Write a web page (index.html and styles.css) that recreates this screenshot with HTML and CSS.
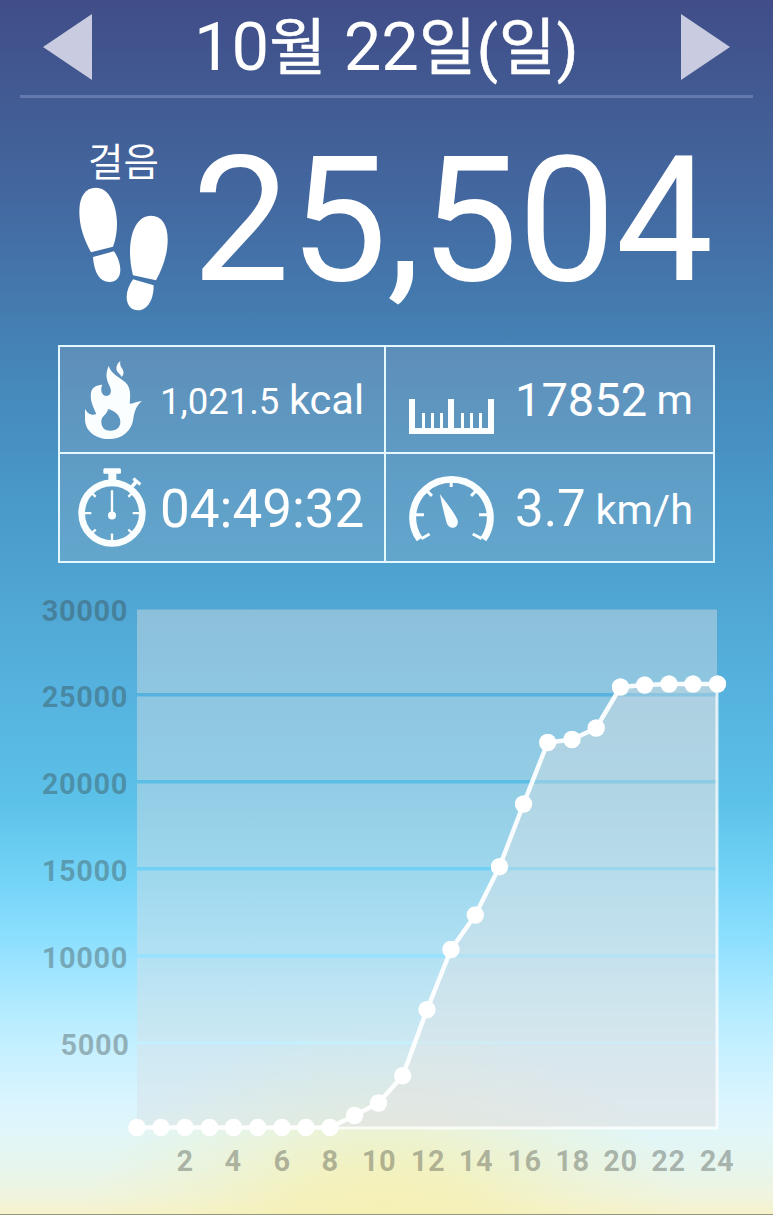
FILE: index.html
```
<!DOCTYPE html>
<html lang="ko">
<head>
<meta charset="UTF-8" />
<meta name="viewport" content="width=device-width, initial-scale=1" />
<title>만보기</title>
<link rel="stylesheet" href="styles.css">
</head>

<body>
<div class="app">

  <header class="date-bar">
    <button class="arrow" aria-label="이전"><svg viewBox="0 0 49 66"><path d="M0 33 49 0V66Z"/></svg></button>
    <h1>10<span>월</span> 22<span>일(일)</span></h1>
    <button class="arrow" aria-label="다음"><svg viewBox="0 0 49 66"><path d="M49 33 0 0V66Z"/></svg></button>
  </header>

  <section class="steps">
    <div class="steps-label">
      <span>걸음</span>
      <svg class="feet" viewBox="57 172 267 370">
        <path d="M93 367C72 327 58 292 58 243C58 199 77 173 107 173C146 173 170 221 171 281C171 305 167 328 159 350Z"/>
        <path d="M99 381 162 364C172 379 181 399 181 419C181 442 168 456 148 456C119 456 102 427 99 381Z"/>
        <path d="M219 436C213 412 210 389 210 365C210 303 233 257 273 257C304 257 323 283 323 329C323 375 307 415 288 451Z"/>
        <path d="M219 448 281 466C281 509 263 541 234 541C212 541 200 524 200 501C200 482 208 465 219 448Z"/>
      </svg>
    </div>
    <div class="count">25,504</div>
  </section>

  <section class="stats">
    <div class="stat">
      <svg class="flame" viewBox="105 65 171 234">
        <path fill-rule="evenodd" d="M176 80C182 100 202 111 221 125C240 139 243 158 239 193C249 194 264 185 276 185C261 196 253 215 250 238C245 275 217 299 176 299C136 299 105 275 105 239V208C111 221 124 231 139 224C133 207 119 188 123 160C125 145 139 137 157 136C150 150 155 168 168 170C182 170 186 157 180 143C169 121 165 105 176 80ZM174 209C172 227 154 228 154 247C154 264 164 274 182 274C200 274 211 264 211 248C211 228 193 213 174 209Z"/>
        <path d="M211 65C199 74 196 89 203 98C208 104 213 108 215 113C224 103 221 94 215 86C210 79 210 72 211 65Z"/>
      </svg>
      <p class="value"><b class="kcal">1,021.5</b> <span class="unit">kcal</span></p>
    </div>
    <div class="stat">
      <svg class="ruler" viewBox="0 0 85 35">
        <path d="M0 0H6V29H13V14H16V29H22V14H25V29H31V14H34V29H39V0H45V29H52V14H55V29H61V14H64V29H70V14H73V29H79V0H85V35H0Z"/>
      </svg>
      <p class="value"><b class="meter">17852</b> <span class="unit metric">m</span></p>
    </div>
    <div class="stat">
      <svg class="watch" viewBox="83 386 204 236">
        <path d="M163 386H208Q212 386 212 392V399Q212 403 208 403H198V424H174V403H163Q159 403 159 399V391Q159 386 163 386Z"/>
        <circle class="line" cx="185" cy="521" r="91" stroke-width="20"/>
        <path class="line" stroke-width="11" d="M241 446 258 426"/>
        <path class="line" stroke-width="9" d="M249 417 270 435"/>
        <path class="line" stroke-width="7" d="M185 452V518M100 521H123M247 521H270M185 582V604M122 458 136 472M248 458 234 472M122 584 136 570M248 584 234 570"/>
        <circle cx="185" cy="528" r="12"/>
      </svg>
      <p class="value"><b class="time">04:49:32</b></p>
    </div>
    <div class="stat">
      <svg class="gauge" viewBox="88 399 254 208">
        <path class="line" stroke-width="21" d="M119 599A117 115 0 1 1 311 599"/>
        <path class="line" stroke-width="9" d="M214 413V441M138 450 156 468M292 450 274 468M105 525H132M325 525H298M124 597 149 583M306 597 279 583"/>
        <path d="M180 462C196 484 222 516 233 540C240 567 207 573 200 548C195 529 184 486 180 462Z"/>
      </svg>
      <p class="value"><b class="speed">3.7</b> <span class="unit metric">km/h</span></p>
    </div>
  </section>

  <svg class="chart" viewBox="0 590 773 625">
    <defs>
      <marker id="dot" markerUnits="userSpaceOnUse" markerWidth="18" markerHeight="18" refX="9" refY="9">
        <circle cx="9" cy="9" r="8.7" fill="#fff"/>
      </marker>
    </defs>

    <!-- bands between grid lines -->
    <path class="band" d="M137 609.500H717V693H137ZM137 696.500H717V780H137ZM137 783.500H717V867H137ZM137 870.500H717V954H137ZM137 957.500H717V1041H137ZM137 1044.500H717V1127H137Z"/>

    <path class="area" d="M330 1127.500 354.500 1115.500 378.500 1103 402.700 1075.700 427 1009.700 451 949.500 475.300 915 499.500 866.700 523.500 804 547.700 742.500 572 739.500 596.200 728 620.500 687 644.700 685 669 684H717V1127.500Z"/>
    <path class="edge" d="M717 684V1128H330"/>
    <polyline class="steps-line" points="137,1127.500 161,1127.500 185,1127.500 209.500,1127.500 233.500,1127.500 257.700,1127.500 282,1127.500 306,1127.500 330,1127.500 354.500,1115.500 378.500,1103 402.700,1075.700 427,1009.700 451,949.500 475.300,915 499.500,866.700 523.500,804 547.700,742.500 572,739.500 596.200,728 620.500,687 644.700,685 669,684 693,684 717.500,684"/>

    <g class="y-labels">
      <text x="128" y="620.500">30000</text>
      <text x="128" y="707">25000</text>
      <text x="128" y="794">20000</text>
      <text x="128" y="881">15000</text>
      <text x="128" y="968">10000</text>
      <text x="129.500" y="1055">5000</text>
    </g>
    <g class="x-labels">
      <text x="185" y="1171">2</text>
      <text x="233" y="1171">4</text>
      <text x="282" y="1171">6</text>
      <text x="330" y="1171">8</text>
      <text x="379" y="1171">10</text>
      <text x="428" y="1171">12</text>
      <text x="476" y="1171">14</text>
      <text x="524.500" y="1171">16</text>
      <text x="572.500" y="1171">18</text>
      <text x="620.500" y="1171">20</text>
      <text x="668.500" y="1171">22</text>
      <text x="717" y="1171">24</text>
    </g>
  </svg>

</div>
</body>
</html>
```
FILE: styles.css
```
* {
  box-sizing: border-box;
}
body {
  margin: 0;
  font-family: Roboto, "Noto Sans CJK KR", sans-serif;
  color: #fff;
}
.app {
  display: flex;
  flex-direction: column;
  width: 773px;
  height: 1215px;
  overflow: hidden;
  border-bottom: 1px solid #96987a;
  background:
    radial-gradient(ellipse 300px 200px at 385px 1225px, rgba(246, 240, 176, 0.9) 0%, rgba(246, 240, 176, 0.72) 30%, rgba(246, 240, 180, 0.3) 65%, rgba(246, 240, 180, 0) 100%),
    linear-gradient(#404d88 0, #425b93 100px, #4368a0 200px, #447aae 300px, #468bbd 400px, #4999c9 500px, #50a6d3 600px, #56b3df 700px, #5cc1e8 800px, #75d5f8 885px, #90e0ff 945px, #aeeaff 1000px, #c6f0ff 1050px, #d9f5ff 1100px, #e1f6f8 1135px, #e7f5ec 1170px, #f0f4dc 1198px, #f6f2cc 1214px);
}
.date-bar {
  display: flex;
  flex-shrink: 0;
  justify-content: space-between;
  align-items: flex-start;
  height: 98px;
  margin: 0 20px;
  padding: 14px 23px 0;
  border-bottom: 3px solid #6478ae;
}
.arrow {
  padding: 0;
  border: none;
  background: none;
  cursor: pointer;
}
.arrow svg {
  display: block;
  width: 49px;
  height: 66px;
  fill: #c9cce0;
}
h1 {
  margin: 0;
  font-size: 67px;
  line-height: 66px;
  font-weight: 400;
  white-space: nowrap;
}
h1 span {
  font-size: 62px;
  line-height: 1;
  letter-spacing: 0.8px;
  -webkit-text-stroke: 0.6px #fff;
}
.steps {
  display: flex;
  flex-shrink: 0;
  height: 247px;
  padding-left: 79px;
}
.steps-label {
  width: 113px;
  padding-top: 40px;
}
.steps-label span {
  display: block;
  padding-left: 9px;
  font-size: 38.5px;
  line-height: 49px;
}
.feet {
  display: block;
  width: 89px;
  height: 124px;
  fill: #fff;
}
.count {
  padding-top: 36px;
  font-size: 174px;
  line-height: 174px;
  letter-spacing: -0.4px;
}
.stats {
  display: grid;
  flex-shrink: 0;
  grid-template-columns: 326px 327px;
  grid-template-rows: 107px 107px;
  width: 657px;
  height: 218px;
  margin-left: 58px;
  border: 2px solid #e4f8ff;
  background: rgba(190, 190, 200, 0.2);
}
.stat {
  display: grid;
  grid-template-columns: 100px 1fr;
  align-items: center;
}
.stat:nth-child(odd) {
  border-right: 2px solid #e4f8ff;
}
.stat:nth-child(even) {
  grid-template-columns: 129px 1fr;
}
.stat:nth-child(-n+2) {
  border-bottom: 2px solid #e4f8ff;
}
.stat svg {
  fill: #fafeff;
}
.stat .line {
  fill: none;
  stroke: #fafeff;
}
.flame {
  width: 57px;
  height: 78px;
  margin: 1px 0 0 25px;
}
.ruler {
  width: 85px;
  height: 35px;
  margin: 33px 0 0 23px;
}
.watch {
  width: 68px;
  height: 79px;
  margin: 0 0 0 18px;
}
.gauge {
  width: 85px;
  height: 69px;
  margin: 0 0 1px 23px;
}
.value {
  display: flex;
  align-items: baseline;
  justify-content: space-between;
  margin: 0;
  padding-right: 20px;
}
.value b {
  font-weight: 400;
}
.kcal {
  font-size: 36.5px;
}
.meter {
  padding-top: 2px;
  font-size: 47px;
}
.time {
  padding-top: 3px;
  font-size: 53px;
}
.speed {
  padding-top: 3px;
  font-size: 51px;
}
.unit {
  font-size: 41.5px;
}
.metric {
  padding-bottom: 3px;
  transform: translateY(-2.5px);
}
.chart {
  display: block;
  flex-shrink: 0;
  width: 773px;
  height: 625px;
  margin-top: 27px;
}
.band {
  fill: rgba(216, 222, 228, 0.44);
}
.area {
  fill: rgba(230, 228, 226, 0.36);
}
.edge {
  fill: none;
  stroke: rgba(255, 255, 255, 0.75);
  stroke-width: 3;
}
.steps-line {
  fill: none;
  stroke: rgba(255, 255, 255, 0.93);
  stroke-width: 4.5;
  marker-start: url(#dot);
  marker-mid: url(#dot);
  marker-end: url(#dot);
}
.y-labels,
.x-labels {
  font-size: 29px;
  font-weight: 700;
  letter-spacing: 0.6px;
  fill: rgba(50, 55, 50, 0.34);
}
.y-labels {
  text-anchor: end;
}
.x-labels {
  text-anchor: middle;
}
```
